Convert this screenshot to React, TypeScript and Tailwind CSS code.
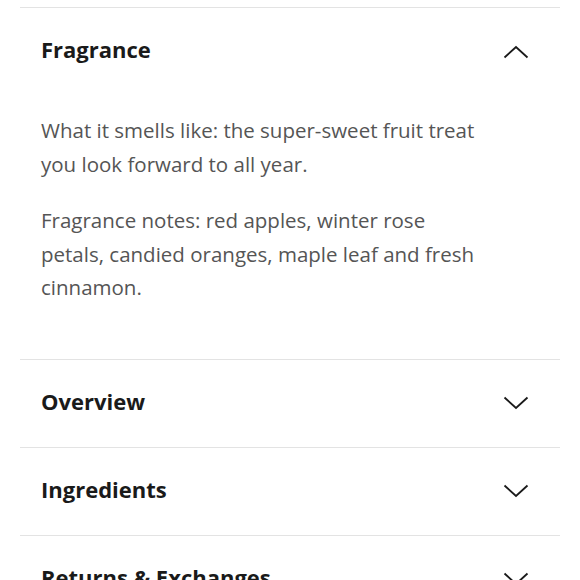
import { useState } from "react"

type Section = {
  title: string
  body?: string[]
}

const sections: Section[] = [
  {
    title: "Fragrance",
    body: [
      "What it smells like: the super-sweet fruit treat you look forward to all year.",
      "Fragrance notes: red apples, winter rose petals, candied oranges, maple leaf and fresh cinnamon.",
    ],
  },
  { title: "Overview" },
  { title: "Ingredients" },
  { title: "Returns & Exchanges" },
]

const Chevron = ({ up }: { up: boolean }) => (
  <svg width="26" height="14" viewBox="0 0 26 14" fill="none" className="shrink-0">
    {up ? (
      <polyline points="1.5,12.5 13,2 24.5,12.5" stroke="#1a1a1a" strokeWidth="1.8" />
    ) : (
      <polyline points="1.5,1.5 13,12 24.5,1.5" stroke="#1a1a1a" strokeWidth="1.8" />
    )}
  </svg>
)

export default function App() {
  const [open, setOpen] = useState<string | null>("Fragrance")

  return (
    <div className="min-h-screen bg-white pt-[7px] font-['Open_Sans',sans-serif]">
      <div className="mx-5">
        {sections.map((s) => {
          const isOpen = open === s.title
          return (
            <div key={s.title} className="border-t border-[#e3e3e3]">
              <button
                onClick={() => setOpen(isOpen ? null : s.title)}
                className="flex h-[87px] w-full items-center justify-between pl-[21px] pr-[31px] text-left"
              >
                <span className="-mt-1 text-[22px] font-bold text-[#1a1a1a]">{s.title}</span>
                <Chevron up={isOpen} />
              </button>
              {isOpen && s.body && (
                <div className="flex flex-col gap-[23px] pb-[54px] pl-[21px] pt-[19px]">
                  {s.body.map((p, i) => (
                    <p key={i} className="w-[442px] text-[20.5px] leading-[33.5px] text-[#555555]">
                      {p}
                    </p>
                  ))}
                </div>
              )}
            </div>
          )
        })}
      </div>
    </div>
  )
}
